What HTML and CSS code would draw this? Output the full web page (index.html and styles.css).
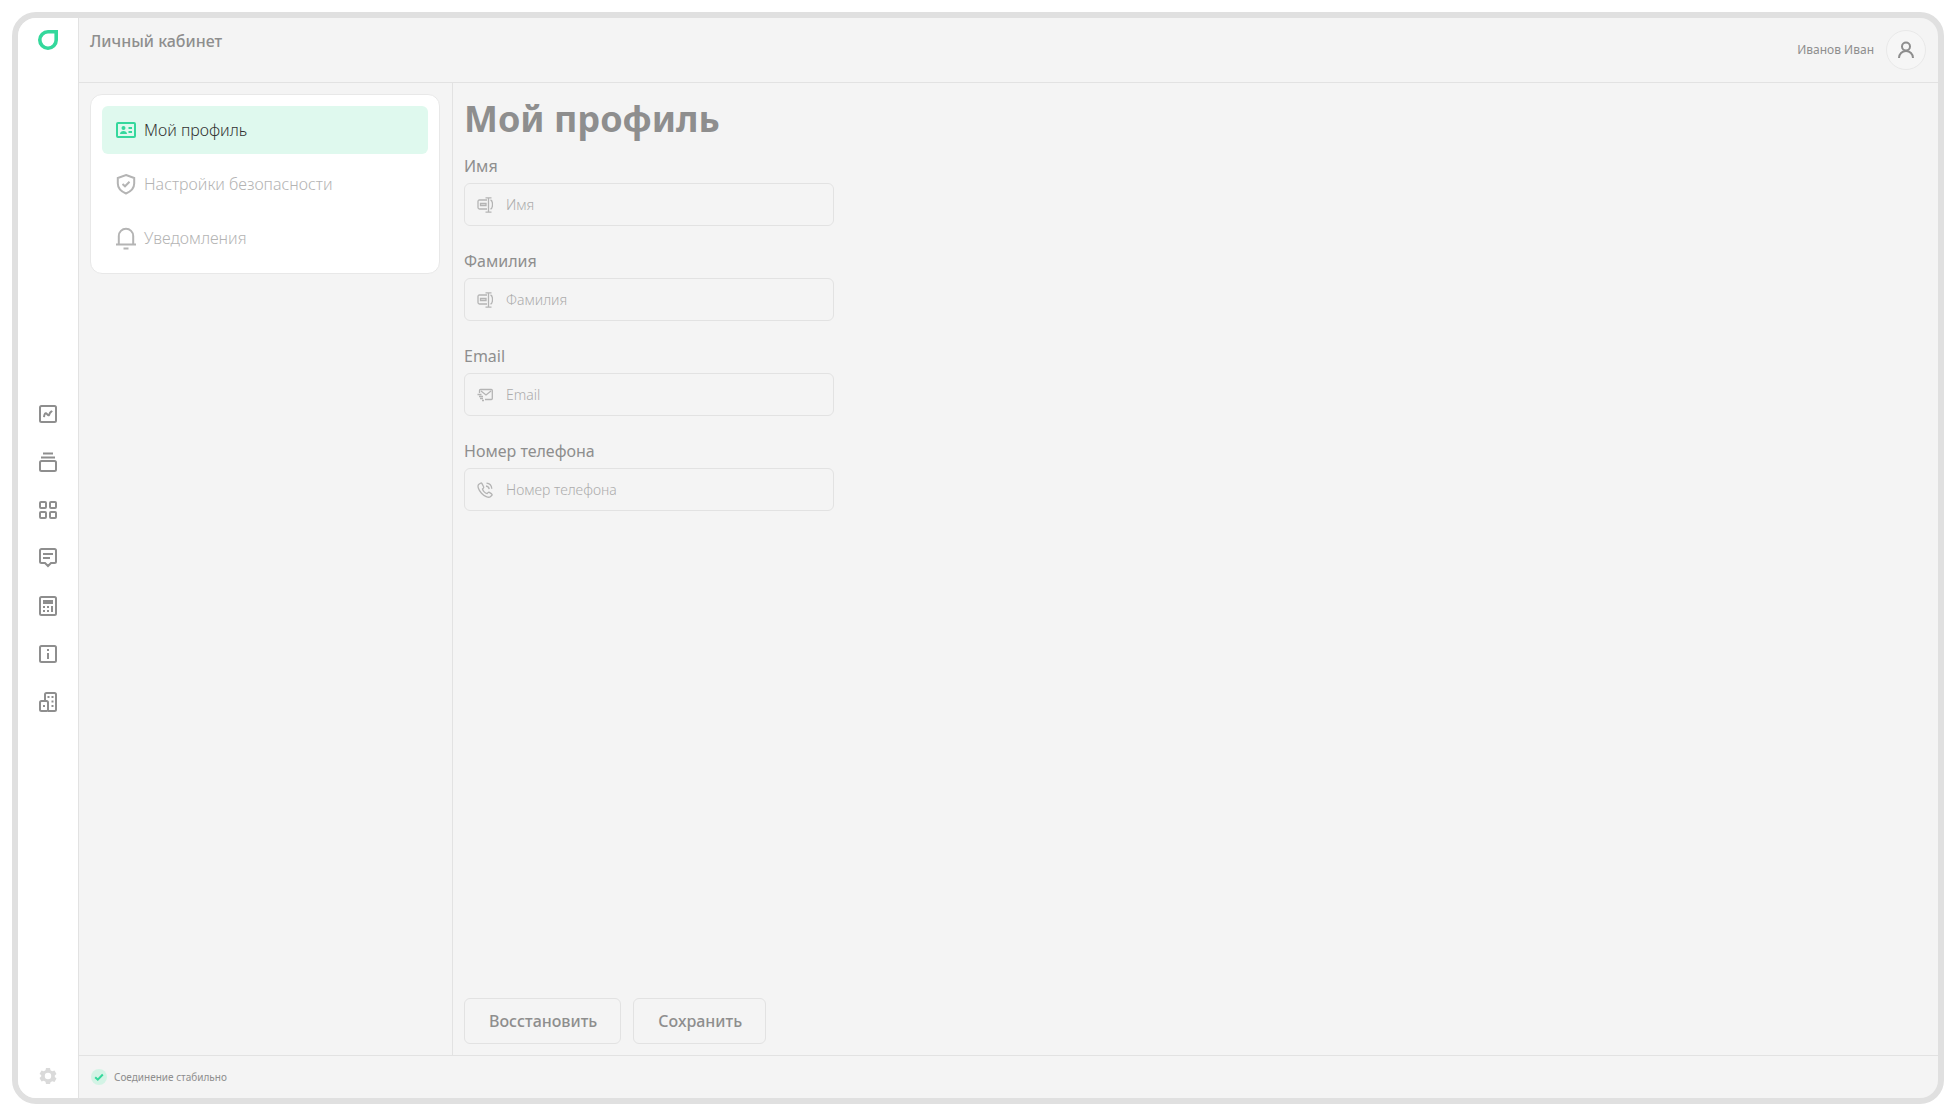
FILE: index.html
```html
<!DOCTYPE html>
<html lang="ru">
<head>
<meta charset="utf-8">
<meta name="viewport" content="width=device-width, initial-scale=1">
<title>Личный кабинет</title>
<link rel="stylesheet" href="styles.css">
</head>
<body>
<div class="app">
  <nav class="rail" aria-label="Разделы">
    <a class="rail-link logo" href="#" aria-label="Главная">
      <svg viewBox="0 0 24 24"><path d="M20.200 3.800V12A8.200 8.200 0 1 1 12 3.800Z" fill="none" stroke="currentColor" stroke-width="3.600"/></svg>
    </a>
    <div class="rail-group">
      <a class="rail-link" href="#" aria-label="Аналитика">
        <svg viewBox="0 0 24 24"><rect x="4" y="4" width="16" height="16" rx="1.500"/><path d="M8 15.200C8.300 11.500 9.500 10.300 10.800 11.800S13 14 13.500 12s1.500-1.500 2.500-3.200"/></svg>
      </a>
      <a class="rail-link" href="#" aria-label="Коллекции">
        <svg viewBox="0 0 24 24"><rect x="4" y="11" width="16" height="10" rx="1.500"/><path d="M5 7.500h14M7 3.500h10"/></svg>
      </a>
      <a class="rail-link" href="#" aria-label="Панели">
        <svg viewBox="0 0 24 24"><rect x="4" y="4" width="6" height="6" rx="1"/><rect x="14" y="4" width="6" height="6" rx="1"/><rect x="4" y="14" width="6" height="6" rx="1"/><rect x="14" y="14" width="6" height="6" rx="1"/></svg>
      </a>
      <a class="rail-link" href="#" aria-label="Сообщения">
        <svg viewBox="0 0 24 24"><path d="M5.500 3h13A1.500 1.500 0 0 1 20 4.500v11a1.500 1.500 0 0 1-1.500 1.500H15l-3 3-3-3H5.500A1.500 1.500 0 0 1 4 15.500v-11A1.500 1.500 0 0 1 5.500 3ZM7 8h10M7 12h7"/></svg>
      </a>
      <a class="rail-link" href="#" aria-label="Калькулятор">
        <svg viewBox="0 0 24 24"><rect x="4" y="3" width="16" height="18" rx="1.500"/><path class="solid" d="M7 6h10v4H7ZM7 12h2v2H7ZM11 12h2v2h-2ZM7 16h2v2H7ZM11 16h2v2h-2ZM15 12h2v6h-2Z"/></svg>
      </a>
      <a class="rail-link" href="#" aria-label="Информация">
        <svg viewBox="0 0 24 24"><rect x="4" y="4" width="16" height="16" rx="1.500"/><path class="solid" d="M11 7h2v2h-2ZM11 11h2v6h-2Z"/></svg>
      </a>
      <a class="rail-link" href="#" aria-label="Организация">
        <svg viewBox="0 0 24 24"><path d="M9 10V4.500A1.500 1.500 0 0 1 10.500 3h8A1.500 1.500 0 0 1 20 4.500v15a1.500 1.500 0 0 1-1.500 1.500H12"/><rect x="4" y="11" width="8" height="10" rx="1.500"/><path class="solid" d="M11.500 6h2v2h-2ZM15.500 6h2v2h-2ZM15.500 10.500h2v2h-2ZM15.500 15h2v2h-2ZM7 15h2v2H7Z"/></svg>
      </a>
    </div>
    <a class="rail-link settings" href="#" aria-label="Настройки">
      <svg viewBox="0 0 24 24"><path class="solid" fill-rule="evenodd" d="M10 4h4l.5 2.300 1.700 1 2.300-.7 2 3.400-1.700 1.500v1.600l1.700 1.500-2 3.400-2.300-.7-1.700 1L14 20h-4l-.5-2.300-1.700-1-2.300.7-2-3.400 1.700-1.500v-1.600L3.500 10l2-3.400 2.300.7 1.700-1ZM12 8.800a3.200 3.200 0 1 0 0 6.400 3.200 3.200 0 0 0 0-6.400Z"/></svg>
    </a>
  </nav>

  <div class="page">
    <header class="header">
      <p class="header-title">Личный кабинет</p>
      <div class="user">
        <span class="user-name">Иванов Иван</span>
        <button class="avatar" type="button" aria-label="Профиль">
          <svg viewBox="0 0 20 20"><circle cx="10" cy="6.500" r="4"/><path d="M3 18a7 7 0 0 1 14 0"/></svg>
        </button>
      </div>
    </header>

    <div class="body">
      <aside class="side">
        <nav class="menu" aria-label="Личный кабинет">
          <a class="menu-item active" href="#" aria-current="page">
            <svg viewBox="0 0 24 24"><rect x="3" y="5" width="18" height="14" rx="1"/><path class="solid" d="M9.500 8a2 2 0 1 1 0 4 2 2 0 0 1 0-4ZM6 16c0-2 1.600-3 3.500-3s3.500 1 3.500 3ZM14.500 9H18v2h-3.500ZM14.500 13H18v2h-3.500Z"/></svg>
            Мой профиль
          </a>
          <a class="menu-item" href="#">
            <svg viewBox="0 0 24 24"><path d="M12 3 20.200 6v5.500c0 4.500-3.400 8-8.200 10-4.800-2-8.200-5.500-8.200-10V6ZM8.500 12l2.500 2.300 4.500-4.500"/></svg>
            Настройки безопасности
          </a>
          <a class="menu-item" href="#">
            <svg viewBox="0 0 24 24"><path d="M2 18.500h20M4.800 18.500V10a7.200 7.200 0 0 1 14.400 0v8.500M9.500 22.500h5"/></svg>
            Уведомления
          </a>
        </nav>
      </aside>

      <main class="content">
        <form class="form">
          <h1 class="title">Мой профиль</h1>
          <div class="fields">
            <div class="field">
              <label for="first-name">Имя</label>
              <div class="control">
                <svg viewBox="0 0 16 16"><path d="M10 3H2.500Q1 3 1 4.500v6Q1 12 2.500 12H10M3.500 6.500H9v2H3.500ZM11.500 1v14M8.500.8h6M8.500 15.200h6M13.500 3q2 .5 2 4.500t-2 4.500"/></svg>
                <input id="first-name" type="text" placeholder="Имя">
              </div>
            </div>
            <div class="field">
              <label for="last-name">Фамилия</label>
              <div class="control">
                <svg viewBox="0 0 16 16"><path d="M10 3H2.500Q1 3 1 4.500v6Q1 12 2.500 12H10M3.500 6.500H9v2H3.500ZM11.500 1v14M8.500.8h6M8.500 15.200h6M13.500 3q2 .5 2 4.500t-2 4.500"/></svg>
                <input id="last-name" type="text" placeholder="Фамилия">
              </div>
            </div>
            <div class="field">
              <label for="email">Email</label>
              <div class="control">
                <svg viewBox="0 0 16 16"><path d="M2.500 6V3.500Q2.500 2.500 3.500 2.500h10.800q1 0 1 1v8q0 1-1 1H8M4 4l5 4 5-4M.5 7.500h4M2 9.500h4M3 11.500h3M5 13.500h2"/></svg>
                <input id="email" type="email" placeholder="Email">
              </div>
            </div>
            <div class="field">
              <label for="phone">Номер телефона</label>
              <div class="control">
                <svg viewBox="0 0 16 16"><path d="M3.500 1.200 1.600 2.500C.2 4 1.500 8 4.500 11.200s6.800 4.600 8.600 3.800l1.800-1.700q.5-.8-.3-1.400l-2.200-1.500q-.8-.4-1.400.3l-.8.900q-1.800-.5-3-1.700T5.500 7l.9-.9q.6-.6.2-1.300L5 1.600q-.6-.9-1.500-.4ZM9 4q2.800.4 3.200 3.200M9.500 1.200q5 .5 5.300 5.500"/></svg>
                <input id="phone" type="tel" placeholder="Номер телефона">
              </div>
            </div>
          </div>
          <div class="actions">
            <button class="button" type="reset">Восстановить</button>
            <button class="button" type="submit">Сохранить</button>
          </div>
        </form>
      </main>
    </div>

    <footer class="status">
      <svg viewBox="0 0 16 16"><circle cx="8" cy="8" r="8"/><path d="m4.200 8.200 2.600 2.500 5-5.200"/></svg>
      <span>Соединение стабильно</span>
    </footer>
  </div>
</div>
</body>
</html>
```
FILE: styles.css
```css
:root {
  --surface: #f4f4f4;
  --line: #e2e2e2;
  --frame: #e0e0e0;
  --text: #8e8e8e;
  --muted: #b4b4b4;
  --accent: #34d89c;
  --accent-soft: #dff9ee;
}

* {
  box-sizing: border-box;
}

body {
  margin: 0;
  padding: 12px;
  min-height: 100vh;
  display: flex;
  background: #fff;
  color: var(--text);
  font: 400 16px/24px "Noto Sans", "Open Sans", sans-serif;
}

svg {
  display: block;
  flex: none;
  fill: none;
  stroke: currentColor;
  stroke-width: 2;
}

svg .solid {
  fill: currentColor;
  stroke: none;
}

a {
  color: inherit;
  text-decoration: none;
}

.app {
  flex: 1;
  display: flex;
  overflow: hidden;
  border: 6px solid var(--frame);
  border-radius: 24px;
  background: var(--surface);
}

/* Icon rail */

.rail {
  flex: none;
  width: 61px;
  padding: 10px 0;
  display: flex;
  flex-direction: column;
  align-items: center;
  justify-content: space-between;
  border-right: 1px solid var(--line);
  background: #fff;
}

.rail-group {
  display: flex;
  flex-direction: column;
  gap: 24px;
}

.rail-link svg {
  width: 24px;
  height: 24px;
}

.logo {
  height: 24px;
  color: var(--accent);
}

.settings {
  color: #dadada;
}

/* Page */

.page {
  flex: 1;
  min-width: 0;
  display: flex;
  flex-direction: column;
}

.header {
  display: flex;
  justify-content: space-between;
  padding: 11px 12px 12px 11px;
  border-bottom: 1px solid var(--line);
}

.header-title {
  margin: 0;
  font-weight: 500;
}

.user {
  display: flex;
  align-items: center;
  gap: 12px;
  padding-top: 1px;
}

.user-name {
  font-size: 12px;
}

.avatar {
  width: 40px;
  height: 40px;
  padding: 0;
  display: flex;
  align-items: center;
  justify-content: center;
  border: 1px solid #e8e8e8;
  border-radius: 50%;
  background: #f6f6f6;
  color: var(--text);
}

.avatar svg {
  width: 20px;
  height: 20px;
}

.body {
  flex: 1;
  display: flex;
}

/* Side menu */

.side {
  flex: none;
  width: 374px;
  padding: 11px 12px 11px 11px;
  border-right: 1px solid var(--line);
}

.menu {
  display: flex;
  flex-direction: column;
  gap: 6px;
  padding: 11px;
  border: 1px solid #e8e8e8;
  border-radius: 12px;
  background: #fff;
}

.menu-item {
  display: flex;
  align-items: center;
  gap: 6px;
  padding: 12px;
  border-radius: 6px;
  color: var(--muted);
  font-weight: 300;
}

.menu-item svg {
  width: 24px;
  height: 24px;
}

.menu-item.active {
  background: var(--accent-soft);
  color: #333;
}

.menu-item.active svg {
  color: var(--accent);
}

/* Form */

.content {
  flex: 1;
  padding: 11px;
  display: flex;
}

.form {
  flex: 1;
  display: flex;
  flex-direction: column;
}

.title {
  margin: 0 0 11px;
  font-size: 36px;
  line-height: 50px;
  font-weight: 700;
}

.fields {
  display: flex;
  flex-direction: column;
  gap: 22px;
  max-width: 370px;
}

.field {
  display: flex;
  flex-direction: column;
  gap: 6px;
}

.field label {
  line-height: 22px;
}

.control {
  display: flex;
  align-items: center;
  gap: 13px;
  height: 43px;
  padding: 0 12px;
  border: 1px solid var(--line);
  border-radius: 6px;
  color: var(--muted);
}

.field + .field {
  padding-top: 2px;
}

.control svg {
  width: 16px;
  height: 16px;
  stroke-width: 1.3;
}

.control input {
  flex: 1;
  min-width: 0;
  padding: 0;
  border: 0;
  outline: 0;
  background: transparent;
  color: var(--text);
  font: inherit;
  font-size: 14px;
  font-weight: 300;
}

.control input::placeholder {
  color: #acacac;
  opacity: 1;
}

.actions {
  margin-top: auto;
  display: flex;
  gap: 12px;
}

.button {
  padding: 10px 23px 10px 24px;
  border: 1px solid var(--line);
  border-radius: 6px;
  background: transparent;
  color: var(--text);
  font: inherit;
  font-weight: 500;
}

/* Status bar */

.status {
  display: flex;
  align-items: center;
  gap: 7px;
  height: 43px;
  padding: 0 12px;
  border-top: 1px solid var(--line);
  font-size: 10px;
}

.status svg {
  width: 16px;
  height: 16px;
  color: var(--accent);
}

.status circle {
  fill: #d3f3e5;
  stroke: none;
}
```
